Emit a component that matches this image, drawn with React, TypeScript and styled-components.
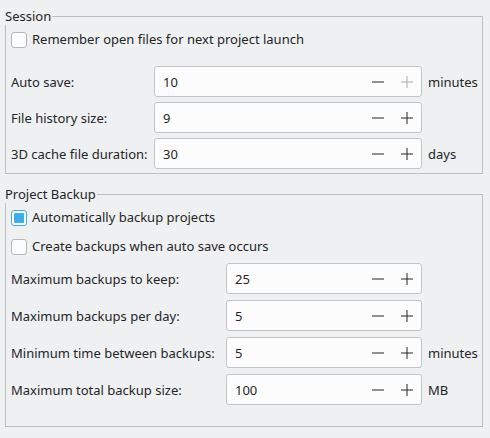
import React from 'react';
import styled, { createGlobalStyle } from 'styled-components';

const GlobalStyle = createGlobalStyle`
    html, body {
        margin: 0;
        padding: 0;
        background: #eff0f1;
    }
    body {
        font-family: 'Noto Sans', 'DejaVu Sans', sans-serif;
        font-size: 13px;
        color: #232629;
    }
`;

const Page = styled.div`
    width: 490px;
    height: 438px;
    box-sizing: border-box;
    padding: 0 7px 0 5px;
    display: flex;
    flex-direction: column;
`;

const Group = styled.fieldset<{ $top: number; $bottom: number }>`
    margin: ${(p) => p.$top}px 0 0 0;
    padding: 6px 4px ${(p) => p.$bottom}px 5px;
    border: 1px solid #bcbebf;
    border-radius: 0;
    min-width: 0;
`;

const Legend = styled.legend`
    margin-left: -6px;
    padding: 0 1px 0 0;
    line-height: 17px;
`;

const CheckRow = styled.label<{ $after: number }>`
    display: flex;
    align-items: center;
    gap: 5px;
    height: 17px;
    margin-bottom: ${(p) => p.$after}px;
    line-height: 17px;
`;

const Box = styled.span<{ $checked?: boolean }>`
    width: 16px;
    height: 16px;
    box-sizing: border-box;
    border: 1px solid ${(p) => (p.$checked ? '#3daee9' : '#b4b6b8')};
    border-radius: 3px;
    background: #fcfcfc;
    display: flex;
    align-items: center;
    justify-content: center;
    &::after {
        content: '';
        display: ${(p) => (p.$checked ? 'block' : 'none')};
        width: 10px;
        height: 10px;
        background: #3daee9;
        border-radius: 1px;
    }
`;

const Form = styled.div<{ $label: number; $gap: number }>`
    display: grid;
    grid-template-columns: ${(p) => p.$label}px 1fr 56px;
    row-gap: ${(p) => p.$gap}px;
    align-items: center;
`;

const Label = styled.span`
    white-space: nowrap;
`;

const Spin = styled.div`
    height: 31px;
    box-sizing: border-box;
    border: 1px solid #c2c4c6;
    border-radius: 3px;
    background: #fcfcfc;
    display: flex;
    align-items: center;
`;

const Value = styled.span`
    flex: 1;
    padding-left: 8px;
`;

const StepButton = styled.span<{ $disabled?: boolean }>`
    width: 29px;
    height: 100%;
    display: flex;
    align-items: center;
    justify-content: center;
    color: ${(p) => (p.$disabled ? '#a7a9ab' : '#232629')};
`;

const Suffix = styled.span`
    padding-left: 6px;
    white-space: nowrap;
`;

const Minus = () => (
    <svg width="12" height="12" viewBox="0 0 12 12">
        <rect x="0" y="5.5" width="12" height="1" fill="currentColor" />
    </svg>
);

const Plus = () => (
    <svg width="12" height="12" viewBox="0 0 12 12">
        <rect x="0" y="5.5" width="12" height="1" fill="currentColor" />
        <rect x="5.5" y="0" width="1" height="12" fill="currentColor" />
    </svg>
);

interface FieldProps {
    label: string;
    value: string;
    suffix?: string;
    maxed?: boolean;
}

const Field: React.FC<FieldProps> = ({ label, value, suffix, maxed }) => (
    <>
        <Label>{label}</Label>
        <Spin>
            <Value>{value}</Value>
            <StepButton>
                <Minus />
            </StepButton>
            <StepButton $disabled={maxed}>
                <Plus />
            </StepButton>
        </Spin>
        <Suffix>{suffix}</Suffix>
    </>
);

const App: React.FC = () => {
    return (
        <>
            <GlobalStyle />
            <Page>
                <Group $top={8} $bottom={4}>
                    <Legend>Session</Legend>
                    <CheckRow $after={18}>
                        <Box />
                        Remember open files for next project launch
                    </CheckRow>
                    <Form $label={143} $gap={5}>
                        <Field label="Auto save:" value="10" suffix="minutes" maxed />
                        <Field label="File history size:" value="9" />
                        <Field label="3D cache file duration:" value="30" suffix="days" />
                    </Form>
                </Group>
                <Group $top={12} $bottom={21}>
                    <Legend>Project Backup</Legend>
                    <CheckRow $after={12}>
                        <Box $checked />
                        Automatically backup projects
                    </CheckRow>
                    <CheckRow $after={8}>
                        <Box />
                        Create backups when auto save occurs
                    </CheckRow>
                    <Form $label={215} $gap={6}>
                        <Field label="Maximum backups to keep:" value="25" />
                        <Field label="Maximum backups per day:" value="5" />
                        <Field label="Minimum time between backups:" value="5" suffix="minutes" />
                        <Field label="Maximum total backup size:" value="100" suffix="MB" />
                    </Form>
                </Group>
            </Page>
        </>
    );
};

export default App;
